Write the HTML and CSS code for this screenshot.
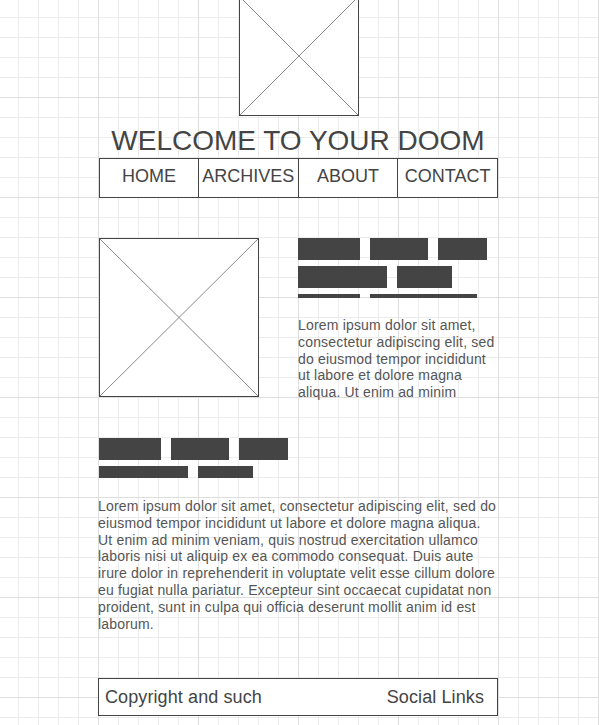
FILE: index.html
```html
<!DOCTYPE html>
<html lang="en">
<head>
  <meta charset="UTF-8" />
  <meta name="viewport" content="width=device-width, initial-scale=1.0"/>
  <title>Welcome to your doom</title>
  <link rel="stylesheet" href="styles.css">
</head>
<body>
  <div class="page">
    <div class="placeholder logo">
      <svg viewBox="0 0 100 100" preserveAspectRatio="none">
        <line x1="0" y1="0" x2="100" y2="100" />
        <line x1="100" y1="0" x2="0" y2="100" />
      </svg>
    </div>

    <h1 class="title">WELCOME TO YOUR DOOM</h1>

    <nav class="nav">
      <div class="nav-item">HOME</div>
      <div class="nav-item">ARCHIVES</div>
      <div class="nav-item">ABOUT</div>
      <div class="nav-item">CONTACT</div>
    </nav>

    <section class="feature">
      <div class="placeholder photo">
        <svg viewBox="0 0 100 100" preserveAspectRatio="none">
          <line x1="0" y1="0" x2="100" y2="100" />
          <line x1="100" y1="0" x2="0" y2="100" />
        </svg>
      </div>
      <div class="feature-text">
        <div class="bars">
          <div class="bar-row big">
            <span class="bar" style="width: 62px"></span>
            <span class="bar" style="width: 58px"></span>
            <span class="bar" style="width: 49px"></span>
          </div>
          <div class="bar-row big">
            <span class="bar" style="width: 89px"></span>
            <span class="bar" style="width: 55px"></span>
          </div>
          <div class="bar-row thin">
            <span class="bar" style="width: 62px"></span>
            <span class="bar" style="width: 107px"></span>
          </div>
        </div>
        <p class="text">Lorem ipsum dolor sit amet, consectetur adipiscing elit, sed do eiusmod tempor incididunt ut labore et dolore magna aliqua. Ut enim ad minim</p>
      </div>
    </section>

    <section class="article">
      <div class="bars">
        <div class="bar-row big">
          <span class="bar" style="width: 62px"></span>
          <span class="bar" style="width: 58px"></span>
          <span class="bar" style="width: 49px"></span>
        </div>
        <div class="bar-row small">
          <span class="bar" style="width: 89px"></span>
          <span class="bar" style="width: 55px"></span>
        </div>
      </div>
      <p class="text">Lorem ipsum dolor sit amet, consectetur adipiscing elit, sed do eiusmod tempor incididunt ut labore et dolore magna aliqua. Ut enim ad minim veniam, quis nostrud exercitation ullamco laboris nisi ut aliquip ex ea commodo consequat. Duis aute irure dolor in reprehenderit in voluptate velit esse cillum dolore eu fugiat nulla pariatur. Excepteur sint occaecat cupidatat non proident, sunt in culpa qui officia deserunt mollit anim id est laborum.</p>
    </section>

    <footer class="footer">
      <span>Copyright and such</span>
      <span>Social Links</span>
    </footer>
  </div>
</body>
</html>
```

FILE: styles.css
```css
* {
  box-sizing: border-box;
}

html,
body {
  margin: 0;
  padding: 0;
}

body {
  font-family: 'Liberation Sans', Arial, sans-serif;
  color: #444;
  background-color: #fff;
  background-image:
    linear-gradient(#dedede 1px, transparent 1px),
    linear-gradient(90deg, #dedede 1px, transparent 1px),
    linear-gradient(#ececec 1px, transparent 1px),
    linear-gradient(90deg, #ececec 1px, transparent 1px);
  background-size: 100px 100px, 100px 100px, 20px 20px, 20px 20px;
  background-position: 0 97px, 98px 0, 0 17px, 18px 0;
  overflow: hidden;
}

.page {
  width: 400px;
  margin-left: 98px;
}

/* image placeholders */
.placeholder {
  border: 1px solid #444;
  background: #fff;
}

.placeholder svg {
  display: block;
  width: 100%;
  height: 100%;
}

.placeholder line {
  stroke: #8a8a8a;
  stroke-width: 1;
  vector-effect: non-scaling-stroke;
}

.logo {
  width: 120px;
  height: 120px;
  margin: -4px auto 0;
  position: relative;
  left: 1px;
}

.title {
  margin: 9px 0 1px;
  font-size: 28px;
  font-weight: normal;
  line-height: 32px;
  text-align: center;
  color: #444;
}

/* nav */
.nav {
  display: flex;
  height: 40px;
  margin-left: 1px;
  border: 1px solid #444;
  background: #fff;
}

.nav-item {
  flex: 1;
  padding-top: 7px;
  font-size: 18px;
  text-align: center;
  white-space: nowrap;
}

.nav-item + .nav-item {
  border-left: 1px solid #444;
}

.nav-item:first-child {
  flex: 0 0 98px;
}

/* feature block */
.feature {
  display: flex;
  justify-content: space-between;
  margin-top: 40px;
}

.photo {
  width: 160px;
  height: 159px;
  margin-left: 1px;
}

.feature-text {
  width: 200px;
}

.bars {
  display: flex;
  flex-direction: column;
  gap: 6px;
}

.bar-row {
  display: flex;
  gap: 10px;
}

.bar {
  display: block;
  background: #444;
}

.bar-row.big .bar {
  height: 22px;
}

.bar-row.small .bar {
  height: 12px;
}

.bar-row.thin .bar {
  height: 4px;
}

.text {
  margin: 19px 0 0;
  font-size: 14px;
  line-height: 16.8px;
  letter-spacing: 0.18px;
  color: #555;
}

/* article */
.article {
  margin-top: 37px;
}

.article .bars {
  margin-left: 1px;
}

.article .text {
  margin-top: 20px;
}

/* footer */
.footer {
  display: flex;
  justify-content: space-between;
  align-items: center;
  height: 38px;
  margin-top: 46px;
  padding: 0 13px 0 6px;
  border: 1px solid #444;
  background: #fff;
  font-size: 18px;
  letter-spacing: 0.1px;
}
```
